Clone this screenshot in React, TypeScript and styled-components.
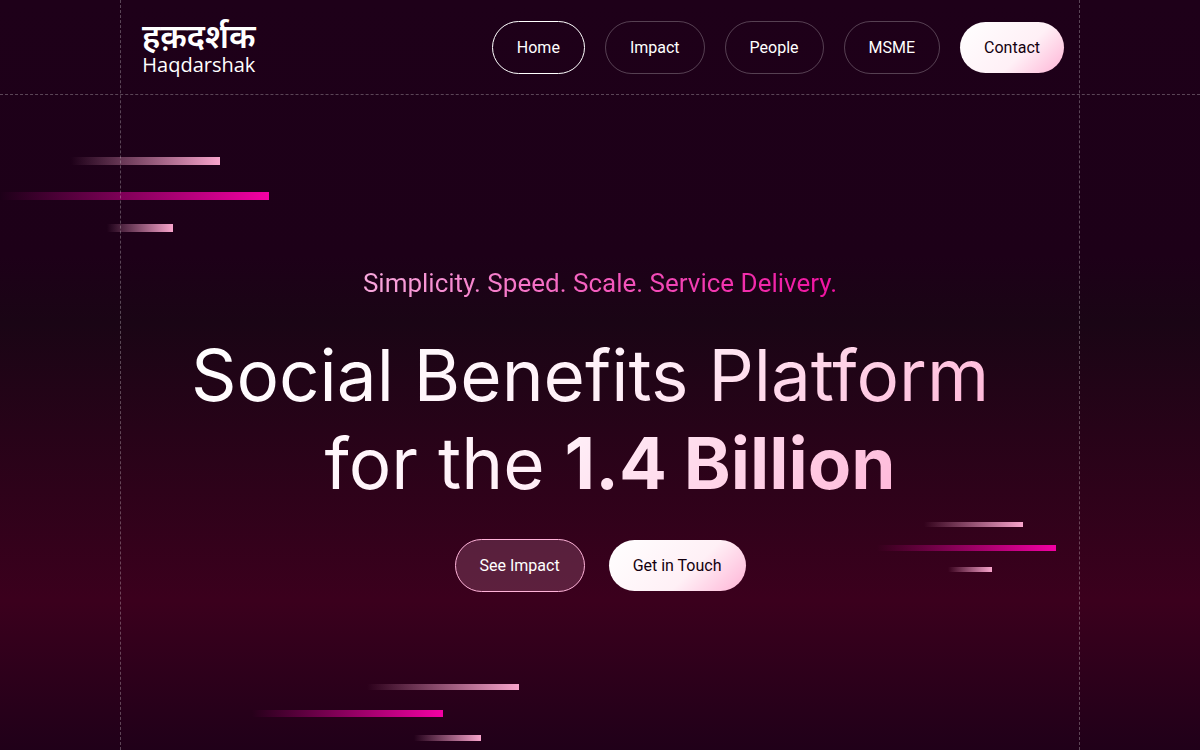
import React, { useId } from "react";
import styled, { createGlobalStyle, css } from "styled-components";

const GlobalStyle = createGlobalStyle`
  *, *::before, *::after { box-sizing: border-box; }
  body { margin: 0; background: #1d0018; }
`;

const Page = styled.div`
  position: relative;
  display: flex;
  flex-direction: column;
  min-height: 100vh;
  overflow: hidden;
  color: #fff;
  font-family: Roboto, "Liberation Sans", sans-serif;
  background: linear-gradient(180deg, #1e0019 0%, #1d0018 34%, #1a0515 43%, #3b001d 80%, #200019 100%);
`;

const Header = styled.header`
  border-bottom: 1px dashed rgba(255, 255, 255, 0.27);
`;

const HeaderInner = styled.div`
  display: flex;
  align-items: center;
  justify-content: space-between;
  width: 80%;
  height: 94px;
  margin: 0 auto;
  padding: 0 16px 0 22px;
`;

const Logo = styled.a`
  display: flex;
  flex-direction: column;
  align-items: center;
  color: #fff;
  text-decoration: none;
  font-family: "Noto Sans", "Noto Sans Devanagari", "Open Sans", sans-serif;
`;

const LogoHindi = styled.span`
  font-size: 33px;
  font-weight: 600;
  line-height: 36px;
`;

const LogoLatin = styled.span`
  font-family: "Open Sans", "Noto Sans", sans-serif;
  font-size: 20px;
  font-weight: 400;
  line-height: 22px;
`;

const Nav = styled.nav`
  display: flex;
  align-items: center;
  gap: 20px;
`;

type Variant = "outline" | "active" | "tinted" | "solid";

const variants = {
  outline: css`
    border: 1px solid rgba(255, 255, 255, 0.25);
  `,
  active: css`
    border: 1px solid #fff;
  `,
  tinted: css`
    border: 1px solid #ffb3d9;
    background: rgba(255, 179, 217, 0.18);
  `,
  solid: css`
    color: #14000f;
    background: linear-gradient(135deg, #fff 0%, #fff0f6 60%, #ffb3d6 100%);
  `,
};

const PillLink = styled.a<{ $variant: Variant }>`
  padding: 16px 24px;
  border-radius: 32px;
  color: #fff;
  font-size: 16px;
  line-height: 19px;
  text-decoration: none;
  white-space: nowrap;
  ${({ $variant }) => variants[$variant]}
`;

const Hero = styled.main`
  display: flex;
  flex: 1;
  flex-direction: column;
  align-items: center;
  padding: 172px 16px 64px;
  text-align: center;
`;

const Tagline = styled.p`
  margin: 0;
  font-size: 26px;
  line-height: 32px;
  color: transparent;
  background: linear-gradient(90deg, #f8a8dc 0%, #f010a0 100%);
  background-clip: text;
`;

const Headline = styled.h1`
  margin: 32px 0 0;
  font-family: Inter, "Liberation Sans", sans-serif;
  font-size: 71px;
  font-weight: 400;
  line-height: 88px;
  color: transparent;
  background: linear-gradient(135deg, #fff 0%, #fff0f8 48%, #ffb3d6 92%);
  background-clip: text;
`;

const Actions = styled.div`
  display: flex;
  align-items: center;
  gap: 24px;
  margin-top: 32px;
`;

const Guides = styled.div`
  position: absolute;
  inset: 0 10%;
  border: dashed rgba(255, 255, 255, 0.27);
  border-width: 0 1px;
  pointer-events: none;
`;

const StreakArt = styled.svg<{ $place: "topLeft" | "right" | "bottom" }>`
  position: absolute;
  pointer-events: none;
  ${({ $place }) =>
    ({
      topLeft: css`top: 157px; left: 0;`,
      right: css`top: 522px; right: 12%;`,
      bottom: css`top: 684px; left: 21%;`,
    })[$place]}
`;

type Bar = { x: number; y: number; w: number; h: number; hot?: boolean };

function Streaks({ place, width, height, bars }: {
  place: "topLeft" | "right" | "bottom";
  width: number;
  height: number;
  bars: Bar[];
}) {
  const id = useId();
  return (
    <StreakArt $place={place} width={width} height={height} viewBox={`0 0 ${width} ${height}`} aria-hidden="true">
      <defs>
        <linearGradient id={`${id}soft`}>
          <stop offset="0" stopColor="#f8a4cc" stopOpacity="0" />
          <stop offset="1" stopColor="#f8a4cc" />
        </linearGradient>
        <linearGradient id={`${id}hot`}>
          <stop offset="0" stopColor="#f400a4" stopOpacity="0" />
          <stop offset="1" stopColor="#f400a4" />
        </linearGradient>
      </defs>
      {bars.map((b) => (
        <rect key={b.y} x={b.x} y={b.y} width={b.w} height={b.h} fill={`url(#${id}${b.hot ? "hot" : "soft"})`} />
      ))}
    </StreakArt>
  );
}

const navItems: { label: string; variant: Variant }[] = [
  { label: "Home", variant: "active" },
  { label: "Impact", variant: "outline" },
  { label: "People", variant: "outline" },
  { label: "MSME", variant: "outline" },
  { label: "Contact", variant: "solid" },
];

export default function App() {
  return (
    <>
      <GlobalStyle />
      <Page>
        <Streaks place="topLeft" width={269} height={75} bars={[
          { x: 71, y: 0, w: 149, h: 8 },
          { x: 0, y: 35, w: 269, h: 8, hot: true },
          { x: 107, y: 67, w: 66, h: 8 },
        ]} />
        <Streaks place="right" width={179} height={50} bars={[
          { x: 47, y: 0, w: 99, h: 5 },
          { x: 0, y: 23, w: 179, h: 6, hot: true },
          { x: 71, y: 45, w: 44, h: 5 },
        ]} />
        <Streaks place="bottom" width={267} height={57} bars={[
          { x: 115, y: 0, w: 152, h: 6 },
          { x: 0, y: 26, w: 191, h: 7, hot: true },
          { x: 162, y: 51, w: 67, h: 6 },
        ]} />
        <Guides />
        <Header>
          <HeaderInner>
            <Logo href="#">
              <LogoHindi lang="hi">हक़दर्शक</LogoHindi>
              <LogoLatin>Haqdarshak</LogoLatin>
            </Logo>
            <Nav>
              {navItems.map((item) => (
                <PillLink key={item.label} href="#" $variant={item.variant}>{item.label}</PillLink>
              ))}
            </Nav>
          </HeaderInner>
        </Header>
        <Hero>
          <Tagline>Simplicity. Speed. Scale. Service Delivery.</Tagline>
          <Headline>
            Social Benefits Platform&nbsp;
            <br />
            &nbsp;for the <strong>1.4 Billion</strong>
          </Headline>
          <Actions>
            <PillLink href="#" $variant="tinted">See Impact</PillLink>
            <PillLink href="#" $variant="solid">Get in Touch</PillLink>
          </Actions>
        </Hero>
      </Page>
    </>
  );
}
